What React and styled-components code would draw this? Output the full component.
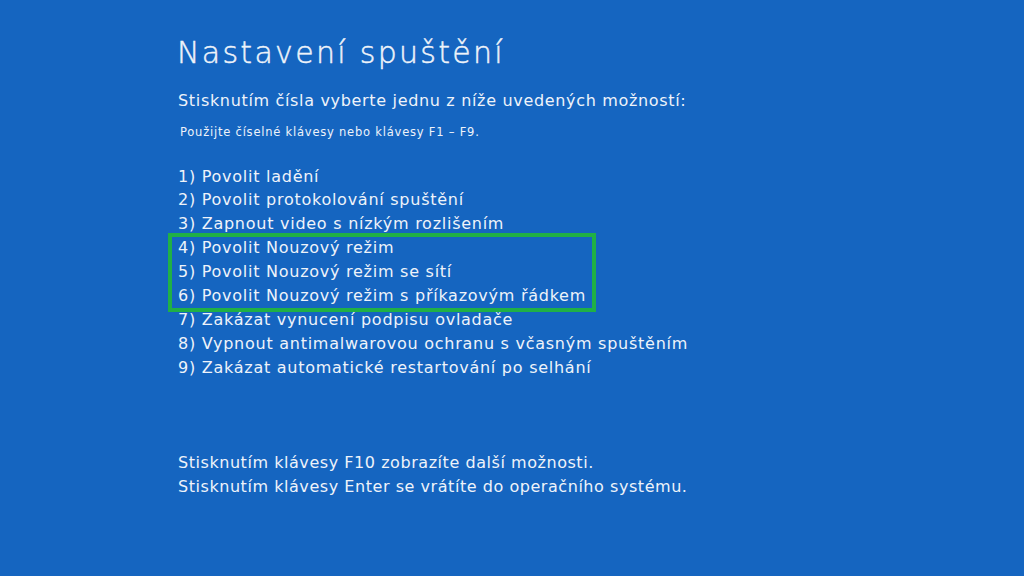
import styled, { createGlobalStyle } from "styled-components";

const Global = createGlobalStyle`
  html, body {
    margin: 0;
    padding: 0;
    background: #1565c0;
  }
  body {
    font-family: "DejaVu Sans", "Open Sans", sans-serif;
    color: #eef3fa;
  }
`;

const Screen = styled.div`
  width: 1024px;
  height: 576px;
  background: #1565c0;
  box-sizing: border-box;
  padding: 33px 0 0 177px;
  overflow: hidden;
`;

const Title = styled.h1`
  margin: 0;
  font-weight: 200;
  font-size: 30px;
  line-height: 40px;
  letter-spacing: 2.3px;
  -webkit-text-stroke: 0.45px #eef3fa;
`;

const Lead = styled.p`
  margin: 16px 0 0 1px;
  font-size: 16px;
  line-height: 24px;
  letter-spacing: 0.67px;
`;

const Hint = styled.p`
  margin: 11px 0 0 3px;
  font-size: 11.5px;
  line-height: 16px;
  letter-spacing: 0.78px;
`;

const Options = styled.ol`
  list-style: none;
  margin: 24.5px 0 0;
  padding: 0;
`;

const Option = styled.li`
  font-size: 16px;
  line-height: 23.9px;
  padding-left: 1px;
  letter-spacing: 0.74px;
`;

const Highlight = styled.div`
  position: relative;
  &::after {
    content: "";
    position: absolute;
    top: -3px;
    bottom: -4px;
    left: -9px;
    width: 428px;
    box-sizing: border-box;
    border: 4px solid #20b046;
    pointer-events: none;
  }
`;

const Footer = styled.div`
  margin-top: 71px;
`;

const FooterLine = styled.p`
  margin: 0;
  font-size: 16px;
  line-height: 24px;
  padding-left: 1px;
  letter-spacing: 0.55px;
`;

const before = [
  "1) Povolit ladění",
  "2) Povolit protokolování spuštění",
  "3) Zapnout video s nízkým rozlišením",
];
const safe = [
  "4) Povolit Nouzový režim",
  "5) Povolit Nouzový režim se sítí",
  "6) Povolit Nouzový režim s příkazovým řádkem",
];
const after = [
  "7) Zakázat vynucení podpisu ovladače",
  "8) Vypnout antimalwarovou ochranu s včasným spuštěním",
  "9) Zakázat automatické restartování po selhání",
];

export default function App() {
  return (
    <>
      <Global />
      <Screen>
        <Title>Nastavení spuštění</Title>
        <Lead>Stisknutím čísla vyberte jednu z níže uvedených možností:</Lead>
        <Hint>Použijte číselné klávesy nebo klávesy F1 – F9.</Hint>
        <Options>
          {before.map((t) => (
            <Option key={t}>{t}</Option>
          ))}
          <Highlight>
            {safe.map((t) => (
              <Option key={t}>{t}</Option>
            ))}
          </Highlight>
          {after.map((t) => (
            <Option key={t}>{t}</Option>
          ))}
        </Options>
        <Footer>
          <FooterLine>Stisknutím klávesy F10 zobrazíte další možnosti.</FooterLine>
          <FooterLine>
            Stisknutím klávesy Enter se vrátíte do operačního systému.
          </FooterLine>
        </Footer>
      </Screen>
    </>
  );
}
